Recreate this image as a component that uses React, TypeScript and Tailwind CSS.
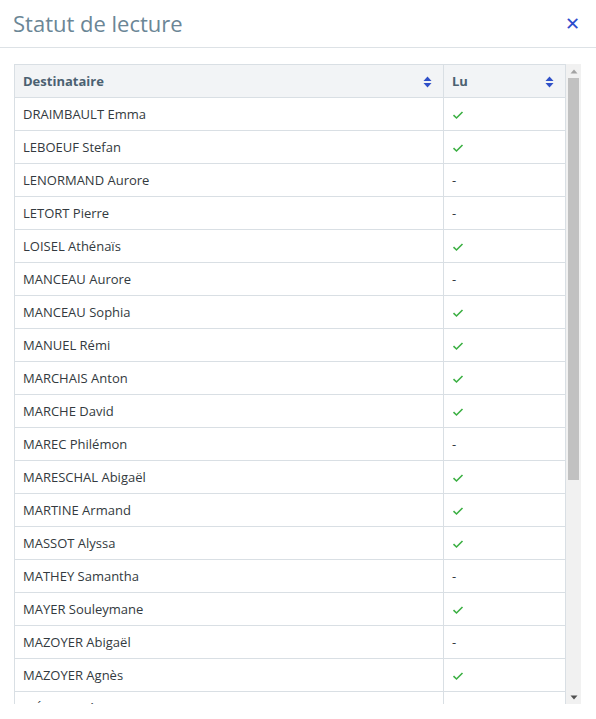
import React from 'react';

type Row = { name: string; read: boolean };

const rows: Row[] = [
  { name: 'DRAIMBAULT Emma', read: true },
  { name: 'LEBOEUF Stefan', read: true },
  { name: 'LENORMAND Aurore', read: false },
  { name: 'LETORT Pierre', read: false },
  { name: 'LOISEL Athénaïs', read: true },
  { name: 'MANCEAU Aurore', read: false },
  { name: 'MANCEAU Sophia', read: true },
  { name: 'MANUEL Rémi', read: true },
  { name: 'MARCHAIS Anton', read: true },
  { name: 'MARCHE David', read: true },
  { name: 'MAREC Philémon', read: false },
  { name: 'MARESCHAL Abigaël', read: true },
  { name: 'MARTINE Armand', read: true },
  { name: 'MASSOT Alyssa', read: true },
  { name: 'MATHEY Samantha', read: false },
  { name: 'MAYER Souleymane', read: true },
  { name: 'MAZOYER Abigaël', read: false },
  { name: 'MAZOYER Agnès', read: true },
  { name: 'MÉNARD Léon', read: false },
];

function SortIcon() {
  return (
    <svg width="9" height="12" viewBox="0 0 9 12" className="shrink-0">
      <path d="M4.5 0.5 L8.5 5 H0.5 Z" fill="#2f50c8" />
      <path d="M4.5 11.5 L8.5 7 H0.5 Z" fill="#2f50c8" />
    </svg>
  );
}

function Check() {
  return (
    <svg width="12" height="10" viewBox="0 0 12 10">
      <path d="M1.5 5.2 L4.5 8 L10.5 2" fill="none" stroke="#3cb043" strokeWidth="1.6" />
    </svg>
  );
}

// drawn scrollbar (the headless browser uses overlay scrollbars)
function ScrollBar() {
  return (
    <div className="w-[15px] shrink-0 bg-[#f1f1f1] flex flex-col items-center">
      <div className="h-[14px] w-full flex items-center justify-center">
        <svg width="8" height="5" viewBox="0 0 8 5">
          <path d="M4 0.5 L7.5 4.5 H0.5 Z" fill="#a3a3a3" />
        </svg>
      </div>
      <div className="w-[11px] h-[402px] bg-[#c1c1c1]" />
      <div className="flex-1" />
      <div className="h-[14px] w-full flex items-center justify-center">
        <svg width="8" height="5" viewBox="0 0 8 5">
          <path d="M4 4.5 L7.5 0.5 H0.5 Z" fill="#505050" />
        </svg>
      </div>
    </div>
  );
}

export default function App() {
  return (
    <div className="w-[596px] h-[719px] bg-white font-['Open_Sans',sans-serif] overflow-hidden">
      {/* Header */}
      <div className="h-[48px] flex items-center justify-between pl-[13px] pr-[16px] border-b border-[#dde2e6]">
        <h1 className="text-[22px] leading-none text-[#6b8696] font-normal -mt-[1px]">Statut de lecture</h1>
        <button className="text-[#2e4dcc] text-[18px] leading-none -mt-[1px]">✕</button>
      </div>

      {/* Body */}
      <div className="pt-[16px] pl-[14px] pr-[15px]">
        <div className="h-[640px] flex">
          <div className="flex-1 overflow-hidden">
            <table className="w-full border-collapse text-[13px]">
              <thead>
                <tr className="bg-[#f2f4f6] h-[33px]">
                  <th className="border border-[#d9dfe4] text-left font-bold text-[#4b6171] px-[8px] pt-[2px]">
                    <div className="flex items-center justify-between pr-[3px]">
                      <span>Destinataire</span>
                      <SortIcon />
                    </div>
                  </th>
                  <th className="border border-[#d9dfe4] text-left font-bold text-[#4b6171] px-[8px] pt-[2px] w-[122px]">
                    <div className="flex items-center justify-between pr-[3px]">
                      <span>Lu</span>
                      <SortIcon />
                    </div>
                  </th>
                </tr>
              </thead>
              <tbody>
                {rows.map((r) => (
                  <tr key={r.name} className="h-[33px]">
                    <td className="border border-[#d9dfe4] px-[8px] pt-[2px] text-[#333a40]">{r.name}</td>
                    <td className="border border-[#d9dfe4] px-[8px] pt-[2px] text-[#333a40]">
                      {r.read ? <Check /> : <span>-</span>}
                    </td>
                  </tr>
                ))}
              </tbody>
            </table>
          </div>
          <ScrollBar />
        </div>
      </div>
    </div>
  );
}
